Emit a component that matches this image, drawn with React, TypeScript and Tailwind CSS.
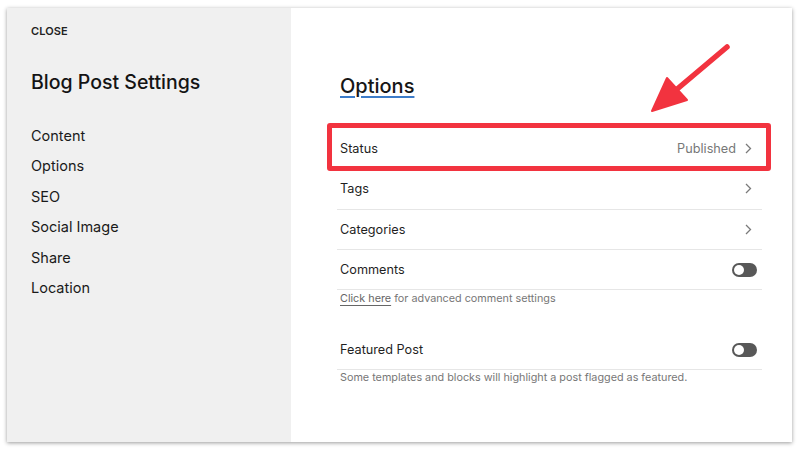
// Blog post settings modal — options panel with the Status row called out
const font = { fontFamily: "Inter, 'Noto Sans', sans-serif" };

const navItems = ["Content", "Options", "SEO", "Social Image", "Share", "Location"];

function Chevron() {
  return (
    <svg width="7" height="11" viewBox="0 0 7 11" fill="none" stroke="#7a7a7a" strokeWidth="1.3" className="mr-[5px]" aria-hidden>
      <path d="M1 1l4.5 4.5L1 10" />
    </svg>
  );
}

function Toggle() {
  return (
    <div className="flex h-[14px] w-[25px] items-center rounded-full bg-[#585858] px-[2px]">
      <div className="h-[10px] w-[10px] rounded-full bg-white" />
    </div>
  );
}

function Row({ label, children }: { label: string; children?: React.ReactNode }) {
  return (
    <div className="flex h-[40.3px] items-center justify-between border-b border-[#e6e6e6] pl-[3px] pr-[5px]">
      <span className="text-[12.7px] text-[#1f1f1f]">{label}</span>
      {children}
    </div>
  );
}

export default function App() {
  return (
    <div className="relative h-[453px] w-[800px] bg-white pl-[7px] pt-[8px]" style={font}>
      <div className="flex h-[434px] w-[785px] shadow-[0_1px_4px_rgba(0,0,0,0.4)]">
        <aside className="w-[284px] shrink-0 bg-[#f0f0f0] pl-[24px] pt-[16px]">
          <div className="text-[11px] font-semibold leading-[14px] tracking-[0.01em] text-[#222]">CLOSE</div>
          <h1 className="mt-[32px] text-[19.5px] font-medium leading-[24px] text-[#141414]">Blog Post Settings</h1>
          <nav className="mt-[27px] flex flex-col">
            {navItems.map((n) => (
              <span key={n} className="text-[14.5px] leading-[30.4px] text-[#1a1a1a]">
                {n}
              </span>
            ))}
          </nav>
        </aside>

        <main className="flex-1 bg-white pl-[46px] pr-[30px] pt-[66px]">
          <h2 className="pl-[3px] text-[20px] font-medium leading-[24px] text-[#161616] underline decoration-[#3d7cc9] decoration-2 underline-offset-[3px]">
            Options
          </h2>

          <div className="mt-[31px]">
            <div className="relative">
              <Row label="Status">
                <span className="flex items-center gap-[9px] text-[12.7px] text-[#777]">
                  Published
                  <Chevron />
                </span>
              </Row>
              <div className="pointer-events-none absolute -bottom-[2px] -left-[10px] -right-[9px] -top-[6px] rounded-[3px] border-[5px] border-[#f2333f]" />
            </div>
            <Row label="Tags">
              <Chevron />
            </Row>
            <Row label="Categories">
              <Chevron />
            </Row>
            <Row label="Comments">
              <Toggle />
            </Row>
            <p className="pl-[3px] pt-[2px] text-[10.8px] leading-[14px] text-[#777]">
              <span className="text-[#666] underline underline-offset-[3px]">Click here</span> for advanced comment
              settings
            </p>

            <div className="mt-[24px]">
              <Row label="Featured Post">
                <Toggle />
              </Row>
            </div>
            <p className="pl-[3px] pt-[1px] text-[10.8px] leading-[14px] text-[#777]">
              Some templates and blocks will highlight a post flagged as featured.
            </p>
          </div>
        </main>
      </div>

      <svg className="pointer-events-none absolute left-[640px] top-[40px]" width="100" height="80" viewBox="0 0 100 80" aria-hidden>
        <path d="M87 7L36 50" stroke="#f2333f" strokeWidth="5.5" strokeLinecap="round" />
        <path d="M27 38L12 71L47 60Z" fill="#f2333f" stroke="#f2333f" strokeWidth="2" strokeLinejoin="round" />
      </svg>
    </div>
  );
}
